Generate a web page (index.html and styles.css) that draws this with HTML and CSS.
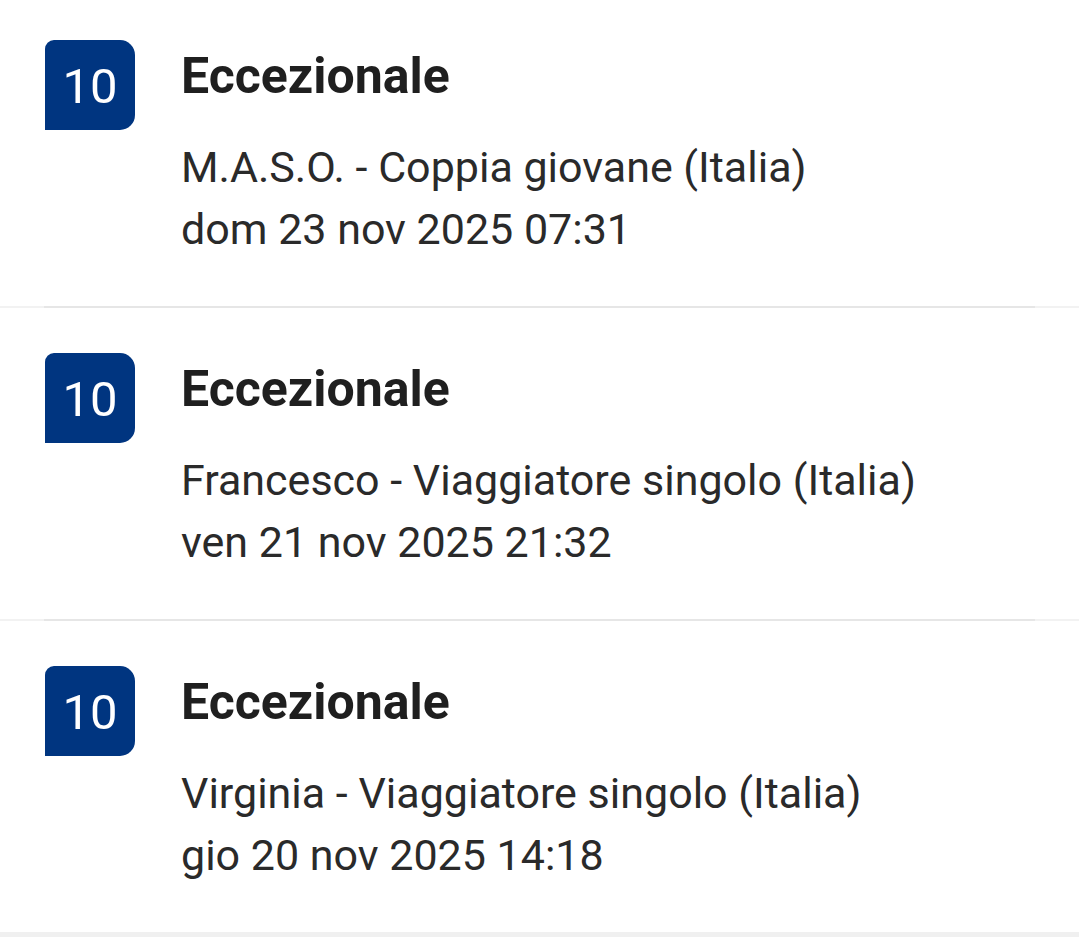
FILE: index.html
```html
<!DOCTYPE html>
<html lang="it">
<head>
<meta charset="utf-8">
<title>Recensioni</title>
<link rel="stylesheet" href="styles.css">
</head>
<body>
<main class="reviews">
  <article class="review review-first">
    <div class="score">10</div>
    <div class="info">
      <h2 class="title">Eccezionale</h2>
      <p class="line">M.A.S.O. - Coppia giovane (Italia)</p>
      <p class="line">dom 23 nov 2025 07:31</p>
    </div>
  </article>
  <div class="sep"><div class="sep-inner"></div></div>
  <article class="review">
    <div class="score">10</div>
    <div class="info">
      <h2 class="title">Eccezionale</h2>
      <p class="line">Francesco - Viaggiatore singolo (Italia)</p>
      <p class="line">ven 21 nov 2025 21:32</p>
    </div>
  </article>
  <div class="sep"><div class="sep-inner"></div></div>
  <article class="review">
    <div class="score">10</div>
    <div class="info">
      <h2 class="title">Eccezionale</h2>
      <p class="line">Virginia - Viaggiatore singolo (Italia)</p>
      <p class="line">gio 20 nov 2025 14:18</p>
    </div>
  </article>
  <div class="band"></div>
</main>
</body>
</html>
```

FILE: styles.css
```css
html, body {
  margin: 0;
  padding: 0;
  background: #ffffff;
}

body {
  font-family: Roboto, "Noto Sans", "Liberation Sans", sans-serif;
  color: #262626;
}

.reviews {
  display: flex;
  flex-direction: column;
}

.review {
  display: flex;
  flex-direction: row;
  align-items: flex-start;
  gap: 46px;
  padding: 45px 0 46px 45px;
}

.review-first {
  padding-top: 40px;
}

.score {
  width: 90px;
  height: 90px;
  flex: 0 0 90px;
  background: #003580;
  color: #ffffff;
  border-radius: 9px 15px 15px 0;
  display: flex;
  align-items: center;
  justify-content: center;
  font-size: 49px;
  font-weight: 400;
  line-height: 1;
  padding-top: 2px;
  box-sizing: border-box;
}

.info {
  display: flex;
  flex-direction: column;
}

.title {
  margin: 8px 0 32px 0;
  font-size: 50px;
  line-height: 56px;
  font-weight: 700;
  color: #1f1f1f;
}

.line {
  margin: 0;
  font-size: 43px;
  line-height: 62px;
  font-weight: 400;
  color: #2a2a2a;
}

.sep {
  height: 2px;
  background: #f2f2f2;
}

.sep-inner {
  height: 2px;
  margin: 0 44px;
  background: #e6e6e6;
}

.band {
  height: 8px;
  background: #f0f0f0;
}
```
